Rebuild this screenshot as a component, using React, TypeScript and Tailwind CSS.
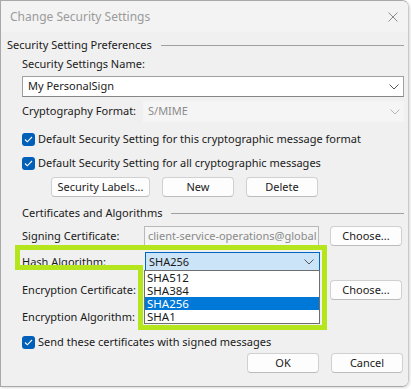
import React from 'react'

const Chevron = ({ className = '' }: { className?: string }) => (
  <svg width="10" height="6" viewBox="0 0 10 6" className={className}>
    <path d="M0.5 0.5 L5 5 L9.5 0.5" fill="none" stroke="currentColor" strokeWidth="1" />
  </svg>
)

function CheckBox({ label }: { label: string }) {
  return (
    <div className="flex h-[16px] items-center">
      <span className="flex h-[13px] w-[13px] items-center justify-center rounded-[3px] bg-[#005fb8]">
        <svg width="9" height="7" viewBox="0 0 9 7">
          <path d="M1 3.5 L3.3 5.8 L8 1" fill="none" stroke="#fff" strokeWidth="1.1" />
        </svg>
      </span>
      <span className="ml-[3px]">{label}</span>
    </div>
  )
}

function Btn({ children, w = 'w-[72px]' }: { children: React.ReactNode; w?: string }) {
  return (
    <div
      className={`flex h-[20px] ${w} items-center justify-center rounded-[4px] border border-[#d0d0d0] border-b-[#bcbcbc] bg-[#fdfdfd]`}
    >
      {children}
    </div>
  )
}

function Section({ title }: { title: string }) {
  return (
    <div className="flex h-[16px] items-center">
      <span className="whitespace-nowrap">{title}</span>
      <div className="ml-[9px] h-px flex-1 bg-[#a0a0a0]" />
    </div>
  )
}

export default function App() {
  return (
    <div className="relative h-[389px] w-[411px] overflow-hidden bg-white font-['Noto_Sans',sans-serif] text-[11px] text-[#1a1a1a]">
      <div className="flex h-[387px] w-[409px] flex-col overflow-hidden rounded-r-[7px] border border-[#a8a8a8] border-r-[#c8c8c8] shadow-[1px_1px_3px_rgba(0,0,0,0.15)]">
        {/* title bar */}
        <div className="flex h-[31px] shrink-0 items-center justify-between bg-[#f3f3f3] pl-[9px] pr-[10px]">
          <span className="text-[12px] text-[#9b9b9b]">Change Security Settings</span>
          <svg width="10" height="10" viewBox="0 0 10 10">
            <path d="M0.5 0.5 L9.5 9.5 M9.5 0.5 L0.5 9.5" stroke="#8a8a8a" strokeWidth="1" />
          </svg>
        </div>

        <div className="flex flex-1 flex-col bg-[#f0f0f0] pl-[6px] pr-[4px]">
          <div className="mt-[5px]">
            <Section title="Security Setting Preferences" />
          </div>

          <div className="flex flex-col pl-[15px]">
            <div className="mt-[3px] flex h-[16px] items-center">Security Settings Name:</div>
            <div className="mt-[4px] flex h-[21px] items-center justify-between border border-[#a0a0a0] border-b-[#868686] bg-white pl-[5px] pr-[4px]">
              <span>My PersonalSign</span>
              <Chevron className="text-[#555]" />
            </div>

            <div className="mt-[4px] flex h-[21px] items-center">
              <span className="w-[121px]">Cryptography Format:</span>
              <div className="flex h-full flex-1 items-center justify-between bg-[#f5f5f5] pl-[5px] pr-[4px] text-[#8c8c8c]">
                <span>S/MIME</span>
                <Chevron className="text-[#b5b5b5]" />
              </div>
            </div>

            <div className="mt-[9px]">
              <CheckBox label="Default Security Setting for this cryptographic message format" />
            </div>
            <div className="mt-[8px]">
              <CheckBox label="Default Security Setting for all cryptographic messages" />
            </div>

            <div className="mt-[6px] flex gap-[12px] pl-[29px]">
              <Btn w="w-[99px]">Security Labels...</Btn>
              <Btn>New</Btn>
              <Btn>Delete</Btn>
            </div>

            <div className="mt-[8px]">
              <Section title="Certificates and Algorithms" />
            </div>

            <div className="mt-[5px] flex h-[20px] items-center">
              <span className="w-[122px]">Signing Certificate:</span>
              <div className="flex h-full w-[175px] items-center overflow-hidden whitespace-nowrap border border-[#b9b9b9] bg-[#f5f5f5] pl-[3px] text-[#8a8a8a]">
                client-service-operations@global
              </div>
              <div className="ml-[11px]">
                <Btn>Choose...</Btn>
              </div>
            </div>

            <div className="mt-[6px] flex h-[20px] items-center">
              <span className="w-[123px]">Hash Algorithm:</span>
              <div className="flex h-full w-[175px] items-center justify-between border border-[#0067c0] bg-[#cce4f7] pl-[3px] pr-[5px]">
                <span>SHA256</span>
                <Chevron className="text-[#555]" />
              </div>
            </div>

            <div className="mt-[8px] flex h-[20px] items-center">
              <span className="w-[308px]">Encryption Certificate:</span>
              <Btn>Choose...</Btn>
            </div>

            <div className="mt-[7px] flex h-[20px] items-center">
              <span>Encryption Algorithm:</span>
            </div>

            <div className="mt-[7px]">
              <CheckBox label="Send these certificates with signed messages" />
            </div>

            <div className="mt-[3px] flex justify-end gap-[12px] pr-[1px]">
              <Btn>OK</Btn>
              <Btn>Cancel</Btn>
            </div>
          </div>
        </div>
      </div>

      {/* open dropdown list */}
      <div className="absolute left-[144px] top-[270px] flex w-[176px] flex-col border border-[#6e6e6e] bg-white text-[11.5px] leading-[13px]">
        <div className="h-[13px] pl-[2px]">SHA512</div>
        <div className="h-[13px] pl-[2px]">SHA384</div>
        <div className="h-[13px] bg-[#0078d7] pl-[2px] text-white">SHA256</div>
        <div className="h-[13px] pl-[2px]">SHA1</div>
      </div>

      {/* highlight annotation */}
      <svg className="pointer-events-none absolute left-0 top-0" width="411" height="389">
        <path
          d="M17.5 247.5 H324.5 V327.5 H140.5 V267.5 H17.5 Z"
          fill="none"
          stroke="#b5e61d"
          strokeWidth="5"
        />
      </svg>
    </div>
  )
}
